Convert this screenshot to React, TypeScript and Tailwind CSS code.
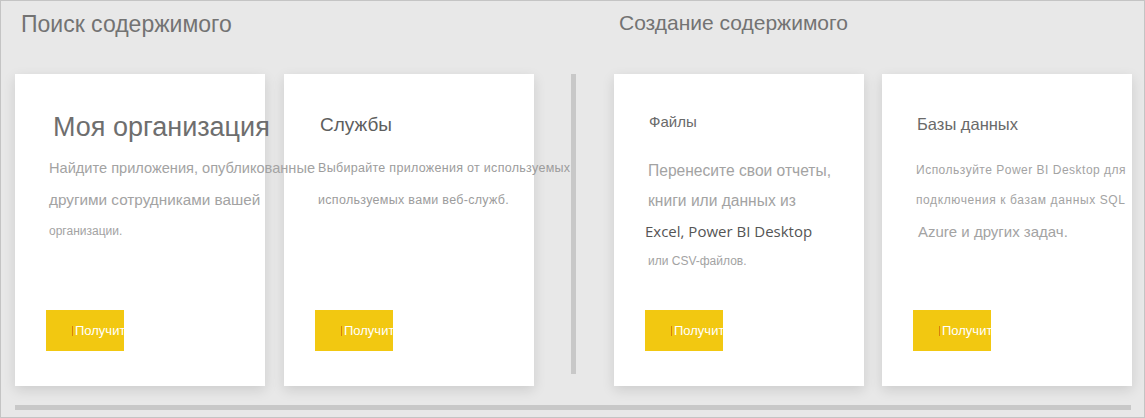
type Line = { text: string; cls: string }

function GetButton() {
  return (
    <div className="mt-auto mb-[35px] ml-[31px] flex h-[41px] w-[78px] items-center overflow-hidden bg-[#f2c811] pl-[26px]">
      <span className="h-[10px] w-px shrink-0 bg-[#d9820a]" />
      <span className="ml-[2px] whitespace-nowrap text-[13px] leading-none text-white">Получить</span>
    </div>
  )
}

function Card({ title, titleCls, lines, descCls }: { title: string; titleCls: string; lines: Line[]; descCls: string }) {
  return (
    <div className="flex h-[312px] w-[250px] shrink-0 flex-col bg-white shadow-[0_4px_12px_rgba(0,0,0,0.12)]">
      <div className={`whitespace-nowrap ${titleCls}`}>{title}</div>
      <div className={`relative z-10 ${descCls}`}>
        {lines.map((l, i) => (
          <div key={i} className={`whitespace-nowrap ${l.cls}`}>
            {l.text}
          </div>
        ))}
      </div>
      <GetButton />
    </div>
  )
}

export default function App() {
  return (
    <div className="h-[418px] w-[1145px] border border-[#c4c4c4] bg-[#e8e8e8] font-['Liberation_Sans',Arial,sans-serif]">
      <div className="flex h-[73px] items-start">
        <div className="w-[598px] pl-[20px] pt-[8px] text-[23px] leading-[30px] text-[#737373]">Поиск содержимого</div>
        <div className="pl-[20px] pt-[7px] text-[21px] leading-[30px] text-[#737373]">Создание содержимого</div>
      </div>

      <div className="flex items-start pl-[14px]">
        <Card
          title="Моя организация"
          titleCls="pt-[37px] pl-[38px] text-[27px] leading-[32px] text-[#6e6e6e]"
          descCls="mt-[10px] pl-[34px] text-[#a3a3a3]"
          lines={[
            { text: 'Найдите приложения, опубликованные', cls: 'text-[14.6px] leading-[31px]' },
            { text: 'другими сотрудниками вашей', cls: 'text-[15.3px] leading-[31px]' },
            { text: 'организации.', cls: 'pt-[1px] text-[12px] leading-[31px]' },
          ]}
        />
        <div className="ml-[19px]">
          <Card
            title="Службы"
            titleCls="pt-[39px] pl-[36px] text-[19px] leading-[24px] text-[#5e5e5e]"
            descCls="mt-[15px] pl-[34px] text-[#9c9c9c]"
            lines={[
              { text: 'Выбирайте приложения от используемых', cls: 'text-[12.5px] leading-[32px] tracking-[0.3px]' },
              { text: 'используемых вами веб-служб.', cls: 'text-[12.5px] leading-[32px] tracking-[0.3px]' },
            ]}
          />
        </div>

        <div className="ml-[37px] h-[300px] w-[5px] shrink-0 bg-[#c8c8c8]" />

        <div className="ml-[38px]">
          <Card
            title="Файлы"
            titleCls="pt-[38px] pl-[35px] text-[15px] leading-[20px] text-[#6a6a6a]"
            descCls="mt-[24px] pl-[34px] text-[#a3a3a3]"
            lines={[
              { text: 'Перенесите свои отчеты,', cls: 'text-[15.6px] leading-[30px]' },
              { text: 'книги или данных из', cls: 'text-[15.6px] leading-[30px]' },
              { text: 'Excel, Power BI Desktop', cls: "-ml-[3px] font-['Open_Sans',sans-serif] text-[15px] leading-[30px] text-[#555]" },
              { text: 'или CSV-файлов.', cls: 'text-[12px] leading-[30px]' },
            ]}
          />
        </div>
        <div className="ml-[18px]">
          <Card
            title="Базы данных"
            titleCls="pt-[40px] pl-[35px] text-[16.5px] leading-[20px] text-[#6a6a6a]"
            descCls="mt-[21px] pl-[34px] text-[#a3a3a3]"
            lines={[
              { text: 'Используйте Power BI Desktop для', cls: 'text-[12px] leading-[30px] tracking-[0.5px]' },
              { text: 'подключения к базам данных SQL', cls: 'text-[12px] leading-[30px] tracking-[0.6px]' },
              { text: 'Azure и других задач.', cls: 'pt-[2px] pl-[2px] text-[15px] leading-[30px]' },
            ]}
          />
        </div>
      </div>

      <div className="ml-[14px] mt-[19px] h-[5px] w-[1116px] bg-[#c8c8c8]" />
    </div>
  )
}
